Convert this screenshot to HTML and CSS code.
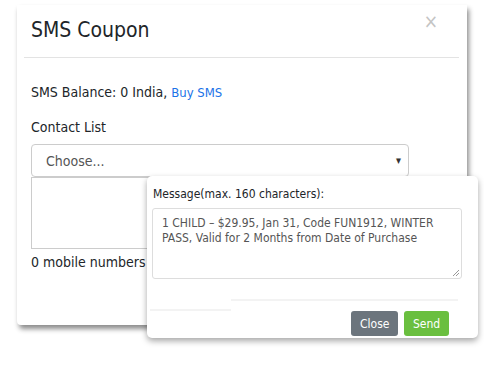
FILE: index.html
```html
<!DOCTYPE html>
<html lang="en">
<head>
  <meta charset="UTF-8" />
  <title>SMS Coupon</title>
  <link rel="stylesheet" href="styles.css">
</head>
<body>
<div class="stage">
  <section class="modal">
    <div class="modal-header">
      <h1>SMS Coupon</h1>
      <span class="close-x">&times;</span>
    </div>
    <div class="modal-body">
      <p class="balance">SMS Balance: 0 India, <a href="#">Buy SMS</a></p>
      <label class="field-label">Contact List</label>
      <div class="select">
        <span>Choose...</span>
        <span class="caret">&#9662;</span>
      </div>
      <div class="numbers"></div>
      <p class="count">0 mobile numbers</p>
    </div>
  </section>

  <section class="popup">
    <p class="msg-label">Message(max. 160 characters):</p>
    <div class="msg-box">1 CHILD &ndash; $29.95, Jan 31, Code FUN1912, WINTER PASS, Valid for 2 Months from Date of Purchase
      <svg class="grip" width="8" height="8" viewBox="0 0 8 8">
        <path d="M7 1 L1 7 M7 4 L4 7" stroke="#999" stroke-width="1" fill="none" />
      </svg>
    </div>
    <div class="rules">
      <span class="rule-left"></span>
      <span class="rule-right"></span>
    </div>
    <div class="popup-footer">
      <button class="btn btn-close">Close</button>
      <button class="btn btn-send">Send</button>
    </div>
  </section>
</div>
</body>
</html>
```

FILE: styles.css
```css
body {
  margin: 0;
  background-color: #fff;
  font-family: "DejaVu Sans", Verdana, sans-serif;
  font-stretch: condensed;
  color: #212529;
}
.stage {
  position: relative;
  width: 484px;
  height: 389px;
  overflow: hidden;
}
.modal {
  margin: 5px 0 0 17px;
  width: 450px;
  height: 320px;
  background-color: #fff;
  border-radius: 0 0 4px 4px;
  box-shadow: 2px 4px 5px rgba(0, 0, 0, 0.45);
  box-sizing: border-box;
}
.modal-header {
  margin: 0 8px 0 7px;
  padding: 0 7px;
  height: 52px;
  border-bottom: 1px solid #e3e3e3;
  display: flex;
  justify-content: space-between;
  align-items: flex-start;
}
h1 {
  margin: 12px 0 0;
  font-size: 21px;
  font-weight: normal;
  line-height: 26px;
}
.close-x {
  margin: 5px 14px 0 0;
  font-size: 19px;
  color: #c4c4c4;
  line-height: 22px;
}
.modal-body {
  padding: 0 14px;
}
.balance {
  margin: 24px 0 0;
  font-size: 14px;
  line-height: 20px;
}
.balance a {
  color: #1a73e8;
  text-decoration: none;
  font-size: 13px;
}
.field-label {
  display: block;
  margin-top: 14px;
  font-size: 14px;
  line-height: 20px;
}
.select {
  margin-top: 7px;
  width: 378px;
  height: 33px;
  border: 1px solid #ccc;
  border-radius: 4px;
  box-sizing: border-box;
  display: flex;
  justify-content: space-between;
  align-items: center;
  padding: 0 7px 0 14px;
  font-size: 14px;
  color: #555;
}
.caret {
  font-size: 11px;
  color: #333;
}
.numbers {
  width: 378px;
  height: 72px;
  border: 1px solid #ccc;
  box-sizing: border-box;
}
.count {
  margin: 3px 0 0;
  font-size: 14px;
  line-height: 20px;
}
.popup {
  position: absolute;
  left: 147px;
  top: 176px;
  width: 331px;
  height: 162px;
  background-color: #fff;
  border-radius: 5px;
  box-shadow: 0 3px 6px rgba(0, 0, 0, 0.35);
  padding: 10px 16px 0 5px;
  box-sizing: border-box;
}
.msg-label {
  margin: 0 0 0 1px;
  font-size: 12px;
  line-height: 16px;
}
.msg-box {
  position: relative;
  margin-top: 6px;
  height: 71px;
  border: 1px solid #ddd;
  border-radius: 3px;
  box-sizing: border-box;
  padding: 7px 9px;
  font-size: 12px;
  line-height: 15px;
  color: #555;
}
.grip {
  position: absolute;
  right: 1px;
  bottom: 1px;
}
.rules {
  position: relative;
  height: 32px;
  margin-left: -2px;
}
.rule-right {
  position: absolute;
  left: 81px;
  right: 4px;
  top: 20px;
  border-top: 2px solid #f3f3f3;
}
.rule-left {
  position: absolute;
  left: 0;
  width: 81px;
  top: 30px;
  border-top: 2px solid #f3f3f3;
}
.popup-footer {
  display: flex;
  justify-content: flex-end;
  gap: 6px;
  padding-right: 13px;
}
.btn {
  height: 25px;
  border: none;
  border-radius: 3px;
  color: #fff;
  font-family: "DejaVu Sans", Verdana, sans-serif;
  font-stretch: condensed;
  font-size: 12px;
  padding: 0 9px;
}
.btn-close {
  background-color: #6c757d;
  width: 47px;
}
.btn-send {
  background-color: #6abf3f;
  width: 45px;
}
```
